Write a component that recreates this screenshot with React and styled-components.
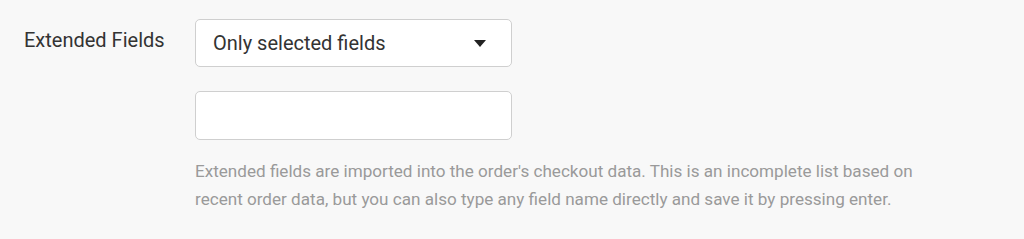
import React, { useState } from 'react';
import styled, { createGlobalStyle } from 'styled-components';

const GlobalStyle = createGlobalStyle`
  body {
    margin: 0;
    background-color: #f8f8f8;
    font-family: Roboto, "Liberation Sans", sans-serif;
  }
`;

const SettingRow = styled.div`
  display: grid;
  grid-template-columns: 171px 1fr;
  padding: 19px 0 0 24px;
  box-sizing: border-box;
  height: 239px;
`;

const Label = styled.label`
  font-size: 20px;
  color: #333;
  line-height: 24px;
  padding-top: 9px;
`;

const Controls = styled.div`
  display: flex;
  flex-direction: column;
  gap: 24px;
`;

const SelectBox = styled.div`
  width: 317px;
  height: 48px;
  box-sizing: border-box;
  border: 1px solid #cfcfcf;
  border-radius: 5px;
  background-color: white;
  display: flex;
  align-items: center;
  padding: 0 17px;
  font-size: 20px;
  color: #333;
  cursor: pointer;
`;

const Caret = styled.span`
  margin-left: auto;
  margin-right: 8px;
  width: 0;
  height: 0;
  border-left: 6.5px solid transparent;
  border-right: 6.5px solid transparent;
  border-top: 7px solid #222;
`;

const TextInput = styled.input`
  width: 317px;
  height: 49px;
  box-sizing: border-box;
  border: 1px solid #cfcfcf;
  border-radius: 5px;
  background-color: white;
  padding: 0 17px;
  font-size: 20px;
  font-family: inherit;
  color: #333;

  &:focus {
    outline: none;
    border-color: #999;
  }
`;

const HelpText = styled.p`
  margin: -7px 0 0;
  max-width: 740px;
  font-size: 17.1px;
  line-height: 28px;
  color: #9a9a9a;
`;

const App = () => {
  const [field, setField] = useState('');

  return (
    <>
      <GlobalStyle />
      <SettingRow>
        <Label>Extended Fields</Label>
        <Controls>
          <SelectBox>
            Only selected fields
            <Caret />
          </SelectBox>
          <TextInput value={field} onChange={(e) => setField(e.target.value)} />
          <HelpText>
            Extended fields are imported into the order's checkout data. This is an incomplete list based on
            recent order data, but you can also type any field name directly and save it by pressing enter.
          </HelpText>
        </Controls>
      </SettingRow>
    </>
  );
};

export default App;
